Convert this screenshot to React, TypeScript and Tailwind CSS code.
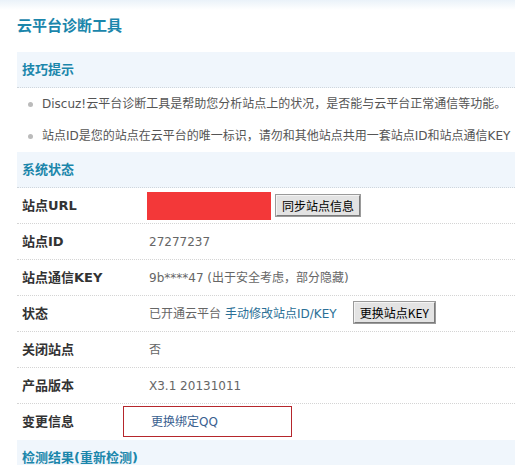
const font = "font-['DejaVu_Sans','Noto_Sans_CJK_SC',sans-serif]";

function Band({ children }: { children: React.ReactNode }) {
  return (
    <div className="h-[36px] flex items-center pl-[5px] bg-[#f0f6fc] border-b border-dotted border-[#cfd6dc] text-[13px] font-bold text-[#1b86ab] whitespace-nowrap">
      {children}
    </div>
  );
}

function Tip({ children }: { children: React.ReactNode }) {
  return (
    <div className="h-[32px] flex items-center whitespace-nowrap text-[12px] text-[#555]">
      <span className="w-[25px] flex justify-center pl-[1px]">
        <span className="w-[5px] h-[5px] rounded-full bg-[#bbbbbb]" />
      </span>
      {children}
    </div>
  );
}

function Row({
  label,
  children,
  last,
}: {
  label: string;
  children: React.ReactNode;
  last?: boolean;
}) {
  return (
    <div
      className={`relative h-[36px] flex items-center whitespace-nowrap ${
        last ? "" : "border-b border-dotted border-[#d4d4d4]"
      }`}
    >
      <div className="w-[132px] pl-[5px] text-[13px] font-bold text-[#333]">{label}</div>
      <div className="flex items-center text-[12px] text-[#666]">{children}</div>
    </div>
  );
}

function Btn({ children }: { children: React.ReactNode }) {
  return (
    <button className="h-[21px] px-[5px] text-[12px] leading-none text-black font-['Noto_Sans_CJK_SC',sans-serif] bg-[#e3e3e3] border border-t-[#f4f4f4] border-l-[#f4f4f4] border-r-[#7a7a7a] border-b-[#7a7a7a] outline outline-1 outline-[#9a9a9a]">
      {children}
    </button>
  );
}

export default function App() {
  return (
    <div className={`w-[515px] h-[465px] overflow-hidden bg-white ${font}`}>
      <div className="h-[10px] bg-gradient-to-b from-[#eaf2f9] to-white" />
      <div className="h-[42px] pl-[17px] pt-[4px] flex items-start">
        <h1 className="text-[15px] font-bold text-[#1b86ab] font-['Noto_Sans_CJK_SC',sans-serif] leading-[22px]">
          云平台诊断工具
        </h1>
      </div>

      <div className="ml-[17px] w-[540px]">
        <Band>技巧提示</Band>
        <Tip>Discuz!云平台诊断工具是帮助您分析站点上的状况，是否能与云平台正常通信等功能。</Tip>
        <Tip>站点ID是您的站点在云平台的唯一标识，请勿和其他站点共用一套站点ID和站点通信KEY</Tip>

        <Band>系统状态</Band>
        <Row label="站点URL">
          <span className="w-[124px] h-[28px] -ml-[2px] mr-[5px] bg-[#f33839]" />
          <Btn>同步站点信息</Btn>
        </Row>
        <Row label="站点ID">27277237</Row>
        <Row label="站点通信KEY">9b****47 (出于安全考虑，部分隐藏)</Row>
        <Row label="状态">
          <span>已开通云平台</span>
          <span className="ml-[4px] text-[#2a6f96]">手动修改站点ID/KEY</span>
          <span className="ml-[17px] -mt-[2px] flex">
            <Btn>更换站点KEY</Btn>
          </span>
        </Row>
        <Row label="关闭站点">否</Row>
        <Row label="产品版本">X3.1 20131011</Row>
        <Row label="变更信息" last>
          <span className="text-[#3a6190] ml-[2px]">更换绑定QQ</span>
          <span className="absolute left-[106px] top-[2px] w-[169px] h-[31px] border border-[#b5262c]" />
        </Row>
        <Band>检测结果(重新检测)</Band>
      </div>
    </div>
  );
}
